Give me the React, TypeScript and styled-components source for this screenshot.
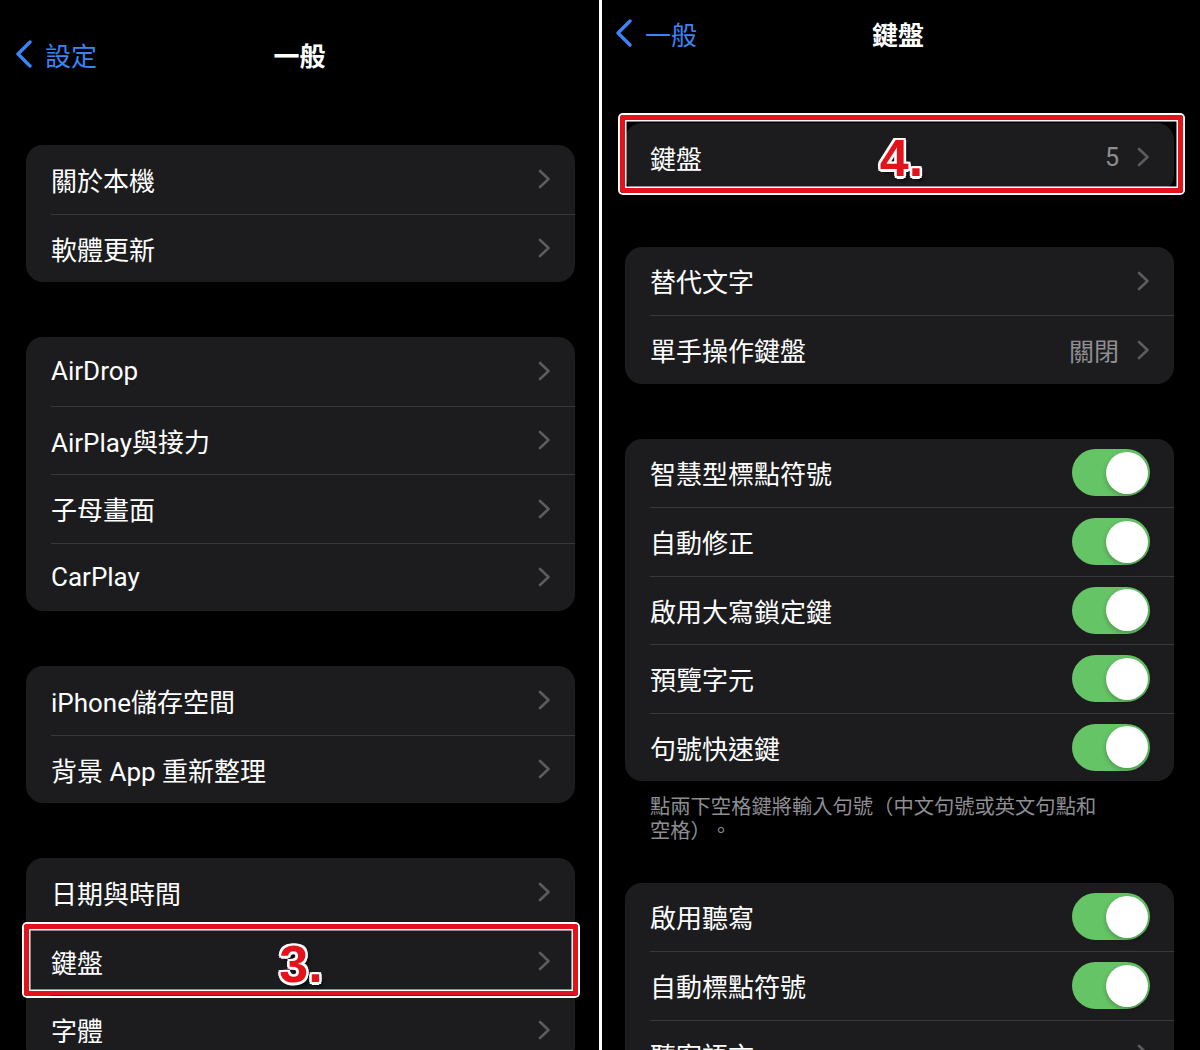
import React from 'react'
import styled, { createGlobalStyle } from 'styled-components'

// ─── Tokens ────────────────────────────────────────────────────────────────────
const c = {
  bg: '#000000',
  card: '#1c1c1e',
  line: '#38383a',
  text: '#ffffff',
  muted: '#8e8e93',
  chevron: '#5b5b60',
  blue: '#3a84f5',
  green: '#65c466',
  red: '#e3131b',
}

const GlobalStyle = createGlobalStyle`
  html, body {
    margin: 0;
    padding: 0;
    background: #fff;
  }
  body {
    font-family: Roboto, "Noto Sans CJK TC", "Noto Sans", sans-serif;
    -webkit-font-smoothing: antialiased;
  }
`

// ─── Layout ────────────────────────────────────────────────────────────────────
const Page = styled.div`
  display: flex;
  gap: 3px;
  width: 1200px;
  height: 1050px;
  background: #fff;
  overflow: hidden;
`

const Screen = styled.div<{ $w: number; $top: number }>`
  width: ${p => p.$w}px;
  flex-shrink: 0;
  height: 100%;
  box-sizing: border-box;
  padding-top: ${p => p.$top}px;
  background: ${c.bg};
  overflow: hidden;
`

const NavBar = styled.div<{ $pl: number; $pr: number; $gap: number }>`
  display: grid;
  grid-template-columns: 1fr auto 1fr;
  align-items: center;
  height: 52px;
  padding: 0 ${p => p.$pr}px 0 ${p => p.$pl}px;
  margin-bottom: ${p => p.$gap}px;
`

const BackButton = styled.div`
  justify-self: start;
  display: flex;
  align-items: center;
  gap: 12px;
  color: ${c.blue};
  font-size: 26px;
  white-space: nowrap;
`

const Title = styled.div`
  color: ${c.text};
  font-size: 26px;
  font-weight: 700;
  white-space: nowrap;
`

const Content = styled.div<{ $pl: number; $pr: number }>`
  padding: 0 ${p => p.$pr}px 0 ${p => p.$pl}px;
`

const Footer = styled.div`
  padding: 13.5px 0 0 25px;
  width: 458px;
  color: ${c.muted};
  font-size: 20.3px;
  line-height: 24px;
  text-spacing-trim: space-all;
`

const Group = styled.div`
  background: ${c.card};
  border-radius: 17px;
  margin-top: 55px;

  &:first-child {
    margin-top: 0;
  }

  ${Footer} + & {
    margin-top: 40px;
  }
`

const Row = styled.div`
  position: relative;
  height: 68.5px;
  padding-left: 25px;
  display: flex;
`

const RowBody = styled.div<{ $first: boolean }>`
  flex: 1;
  display: flex;
  align-items: center;
  gap: 17px;
  padding-right: 24px;
  box-sizing: border-box;
  border-top: ${p => (p.$first ? 'none' : `1px solid ${c.line}`)};
`

const Label = styled.span`
  flex: 1;
  color: ${c.text};
  font-size: 26px;
  white-space: nowrap;
`

const Value = styled.span`
  color: ${c.muted};
  font-size: 25px;
  white-space: nowrap;
`

const Switch = styled.span`
  width: 78px;
  height: 47px;
  flex-shrink: 0;
  box-sizing: border-box;
  padding: 0 2.5px;
  border-radius: 24px;
  background: ${c.green};
  display: flex;
  align-items: center;
  justify-content: flex-end;
`

const Knob = styled.span`
  width: 42px;
  height: 42px;
  border-radius: 50%;
  background: #fff;
  box-shadow: 0 2px 5px rgba(0, 0, 0, 0.25);
`

// annotation overlay drawn over a row
const Mark = styled.div<{ $t: number; $r: number; $b: number; $l: number }>`
  position: absolute;
  top: ${p => p.$t}px;
  right: ${p => p.$r}px;
  bottom: ${p => p.$b}px;
  left: ${p => p.$l}px;
  border: 5px solid ${c.red};
  border-radius: 3px;
  box-shadow: 0 0 0 2px #fff, inset 0 0 0 1.5px #fff;
  display: flex;
  align-items: center;
  justify-content: center;
  pointer-events: none;
`

const MarkNum = styled.span`
  margin-top: 8px;
  font-family: "Liberation Sans", Arial, sans-serif;
  font-weight: 700;
  font-size: 52px;
  line-height: 1;
  color: ${c.red};
  text-shadow:
    -2px -2px 0 #fff, 2px -2px 0 #fff, -2px 2px 0 #fff, 2px 2px 0 #fff,
    0 -2.5px 0 #fff, 0 2.5px 0 #fff, -2.5px 0 0 #fff, 2.5px 0 0 #fff,
    3px 4px 4px rgba(0, 0, 0, 0.75);
`

// ─── Icons ─────────────────────────────────────────────────────────────────────
function BackChevron() {
  return (
    <svg width="18" height="28" viewBox="0 0 18 28">
      <path d="M15 2 L3 14 L15 26" fill="none" stroke={c.blue} strokeWidth="3.4" strokeLinecap="round" strokeLinejoin="round" />
    </svg>
  )
}

function Chevron() {
  return (
    <svg width="14" height="20" viewBox="0 0 14 20" style={{ flexShrink: 0 }}>
      <path d="M3 2 L11.5 10 L3 18" fill="none" stroke={c.chevron} strokeWidth="2.6" strokeLinecap="round" strokeLinejoin="round" />
    </svg>
  )
}

// ─── Data ──────────────────────────────────────────────────────────────────────
type MarkSpec = { n: string; t: number; r: number; b: number; l: number }
type RowSpec = { label: string; value?: string; toggle?: boolean; mark?: MarkSpec }
type SectionSpec = { rows: RowSpec[]; footer?: string }

const generalSections: SectionSpec[] = [
  { rows: [{ label: '關於本機' }, { label: '軟體更新' }] },
  { rows: [{ label: 'AirDrop' }, { label: 'AirPlay與接力' }, { label: '子母畫面' }, { label: 'CarPlay' }] },
  { rows: [{ label: 'iPhone儲存空間' }, { label: '背景 App 重新整理' }] },
  {
    rows: [
      { label: '日期與時間' },
      { label: '鍵盤', mark: { n: '3.', t: -2.5, r: -3, b: -1, l: -2 } },
      { label: '字體' },
    ],
  },
]

const keyboardSections: SectionSpec[] = [
  { rows: [{ label: '鍵盤', value: '5', mark: { n: '4.', t: -8, r: -9, b: -1, l: -5 } }] },
  { rows: [{ label: '替代文字' }, { label: '單手操作鍵盤', value: '關閉' }] },
  {
    rows: [
      { label: '智慧型標點符號', toggle: true },
      { label: '自動修正', toggle: true },
      { label: '啟用大寫鎖定鍵', toggle: true },
      { label: '預覽字元', toggle: true },
      { label: '句號快速鍵', toggle: true },
    ],
    footer: '點兩下空格鍵將輸入句號（中文句號或英文句點和空格）。',
  },
  {
    rows: [
      { label: '啟用聽寫', toggle: true },
      { label: '自動標點符號', toggle: true },
      { label: '聽寫語言' },
    ],
  },
]

// ─── Components ────────────────────────────────────────────────────────────────
function SettingsRow({ row, first }: { row: RowSpec; first: boolean }) {
  return (
    <Row>
      <RowBody $first={first}>
        <Label>{row.label}</Label>
        {row.value && <Value>{row.value}</Value>}
        {row.toggle ? (
          <Switch>
            <Knob />
          </Switch>
        ) : (
          <Chevron />
        )}
      </RowBody>
      {row.mark && (
        <Mark $t={row.mark.t} $r={row.mark.r} $b={row.mark.b} $l={row.mark.l}>
          <MarkNum>{row.mark.n}</MarkNum>
        </Mark>
      )}
    </Row>
  )
}

interface PhoneProps {
  back: string
  title: string
  sections: SectionSpec[]
  width: number
  top: number
  navGap: number
  navPad: [number, number]
  inset: [number, number]
}

function Phone({ back, title, sections, width, top, navGap, navPad, inset }: PhoneProps) {
  return (
    <Screen $w={width} $top={top}>
      <NavBar $pl={navPad[0]} $pr={navPad[1]} $gap={navGap}>
        <BackButton>
          <BackChevron />
          {back}
        </BackButton>
        <Title>{title}</Title>
        <span />
      </NavBar>
      <Content $pl={inset[0]} $pr={inset[1]}>
        {sections.map((s, i) => (
          <React.Fragment key={i}>
            <Group>
              {s.rows.map((r, j) => (
                <SettingsRow key={r.label} row={r} first={j === 0} />
              ))}
            </Group>
            {s.footer && <Footer>{s.footer}</Footer>}
          </React.Fragment>
        ))}
      </Content>
    </Screen>
  )
}

export default function App() {
  return (
    <>
      <GlobalStyle />
      <Page>
        <Phone
          back="設定"
          title="一般"
          sections={generalSections}
          width={599}
          top={28}
          navGap={65}
          navPad={[15, 15]}
          inset={[26, 24]}
        />
        <Phone
          back="一般"
          title="鍵盤"
          sections={keyboardSections}
          width={598}
          top={7}
          navGap={64}
          navPad={[13, 19]}
          inset={[23, 26]}
        />
      </Page>
    </>
  )
}
